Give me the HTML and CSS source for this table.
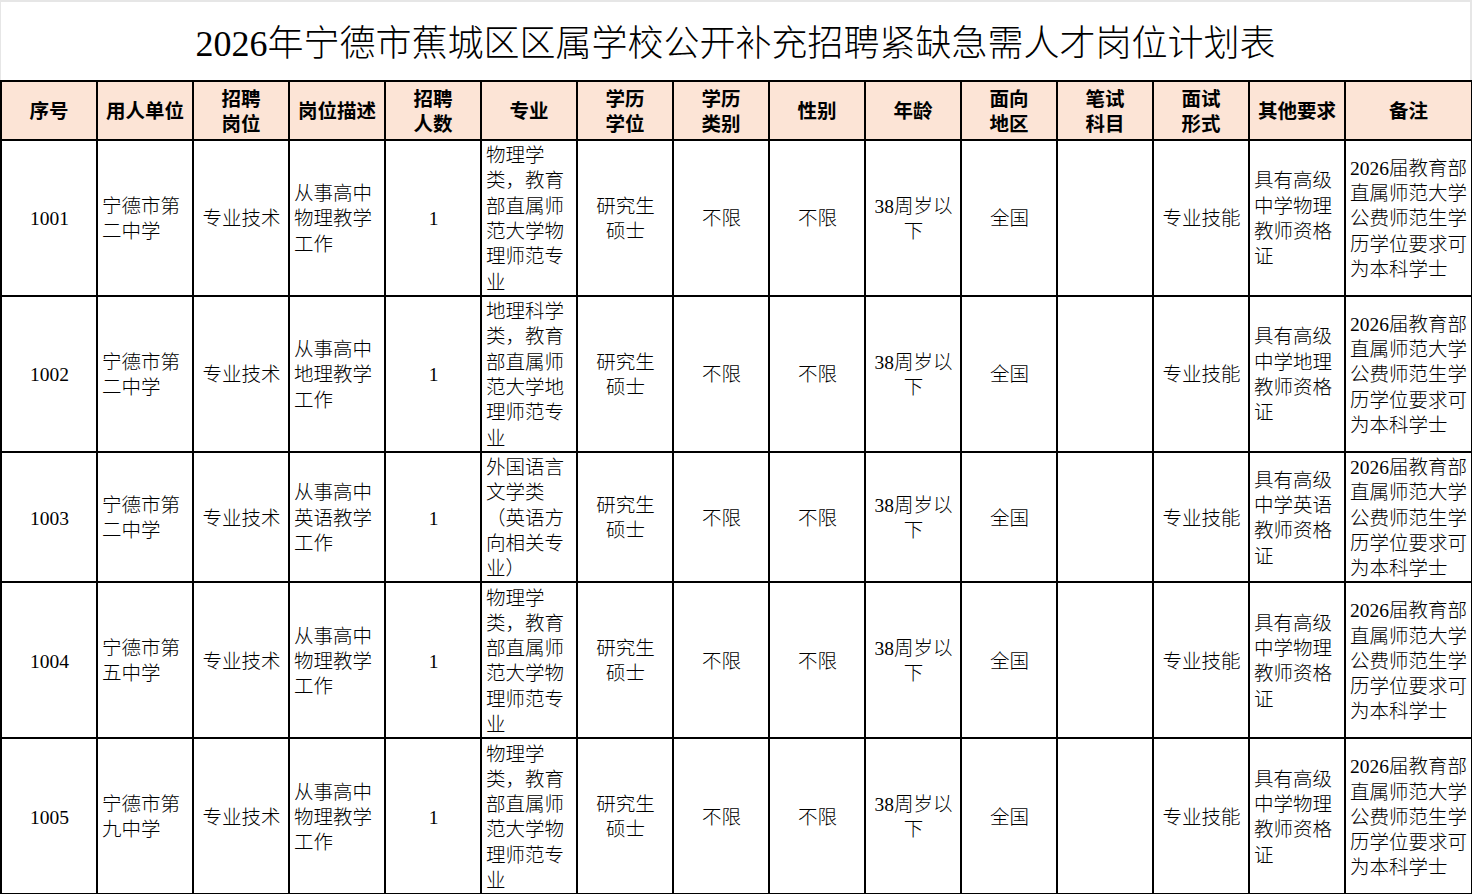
FILE: index.html
```html
<!DOCTYPE html>
<html lang="zh-CN">
<head>
<meta charset="utf-8">
<title>岗位计划表</title>
<link rel="stylesheet" href="styles.css">
</head>
<body>
<div class="sheet">
  <div class="title">2026年宁德市蕉城区区属学校公开补充招聘紧缺急需人才岗位计划表</div>
  <table class="grid">
    <colgroup>
      <col class="c"><col class="c"><col class="c"><col class="c"><col class="c">
      <col class="c"><col class="c"><col class="c"><col class="c"><col class="c">
      <col class="c"><col class="c"><col class="c"><col class="c"><col class="c-last">
    </colgroup>
    <thead>
      <tr class="r-head">
        <th>序号</th>
        <th>用人单位</th>
        <th>招聘<br>岗位</th>
        <th>岗位描述</th>
        <th>招聘<br>人数</th>
        <th>专业</th>
        <th>学历<br>学位</th>
        <th>学历<br>类别</th>
        <th>性别</th>
        <th>年龄</th>
        <th>面向<br>地区</th>
        <th>笔试<br>科目</th>
        <th>面试<br>形式</th>
        <th>其他要求</th>
        <th>备注</th>
      </tr>
    </thead>
    <tbody>
      <tr class="r-tall">
        <td class="ctr">1001</td>
        <td class="lft">宁德市第二中学</td>
        <td class="ctr">专业技术</td>
        <td class="lft">从事高中物理教学工作</td>
        <td class="ctr">1</td>
        <td class="lft">物理学类，教育部直属师范大学物理师范专业</td>
        <td class="ctr">研究生<br>硕士</td>
        <td class="ctr">不限</td>
        <td class="ctr">不限</td>
        <td class="ctr">38周岁以下</td>
        <td class="ctr">全国</td>
        <td class="ctr"></td>
        <td class="ctr">专业技能</td>
        <td class="lft">具有高级中学物理教师资格证</td>
        <td class="lft">2026届教育部直属师范大学公费师范生学历学位要求可为本科学士</td>
      </tr>
      <tr class="r-tall">
        <td class="ctr">1002</td>
        <td class="lft">宁德市第二中学</td>
        <td class="ctr">专业技术</td>
        <td class="lft">从事高中地理教学工作</td>
        <td class="ctr">1</td>
        <td class="lft">地理科学类，教育部直属师范大学地理师范专业</td>
        <td class="ctr">研究生<br>硕士</td>
        <td class="ctr">不限</td>
        <td class="ctr">不限</td>
        <td class="ctr">38周岁以下</td>
        <td class="ctr">全国</td>
        <td class="ctr"></td>
        <td class="ctr">专业技能</td>
        <td class="lft">具有高级中学地理教师资格证</td>
        <td class="lft">2026届教育部直属师范大学公费师范生学历学位要求可为本科学士</td>
      </tr>
      <tr class="r-short">
        <td class="ctr">1003</td>
        <td class="lft">宁德市第二中学</td>
        <td class="ctr">专业技术</td>
        <td class="lft">从事高中英语教学工作</td>
        <td class="ctr">1</td>
        <td class="lft">外国语言文学类（英语方向相关专业）</td>
        <td class="ctr">研究生<br>硕士</td>
        <td class="ctr">不限</td>
        <td class="ctr">不限</td>
        <td class="ctr">38周岁以下</td>
        <td class="ctr">全国</td>
        <td class="ctr"></td>
        <td class="ctr">专业技能</td>
        <td class="lft">具有高级中学英语教师资格证</td>
        <td class="lft">2026届教育部直属师范大学公费师范生学历学位要求可为本科学士</td>
      </tr>
      <tr class="r-tall">
        <td class="ctr">1004</td>
        <td class="lft">宁德市第五中学</td>
        <td class="ctr">专业技术</td>
        <td class="lft">从事高中物理教学工作</td>
        <td class="ctr">1</td>
        <td class="lft">物理学类，教育部直属师范大学物理师范专业</td>
        <td class="ctr">研究生<br>硕士</td>
        <td class="ctr">不限</td>
        <td class="ctr">不限</td>
        <td class="ctr">38周岁以下</td>
        <td class="ctr">全国</td>
        <td class="ctr"></td>
        <td class="ctr">专业技能</td>
        <td class="lft">具有高级中学物理教师资格证</td>
        <td class="lft">2026届教育部直属师范大学公费师范生学历学位要求可为本科学士</td>
      </tr>
      <tr class="r-tall">
        <td class="ctr">1005</td>
        <td class="lft">宁德市第九中学</td>
        <td class="ctr">专业技术</td>
        <td class="lft">从事高中物理教学工作</td>
        <td class="ctr">1</td>
        <td class="lft">物理学类，教育部直属师范大学物理师范专业</td>
        <td class="ctr">研究生<br>硕士</td>
        <td class="ctr">不限</td>
        <td class="ctr">不限</td>
        <td class="ctr">38周岁以下</td>
        <td class="ctr">全国</td>
        <td class="ctr"></td>
        <td class="ctr">专业技能</td>
        <td class="lft">具有高级中学物理教师资格证</td>
        <td class="lft">2026届教育部直属师范大学公费师范生学历学位要求可为本科学士</td>
      </tr>
    </tbody>
  </table>
</div>
</body>
</html>
```

FILE: styles.css
```css
html, body {
  margin: 0;
  padding: 0;
  background: #ffffff;
}

body {
  font-family: "Liberation Serif", "Noto Sans CJK SC", serif;
  color: #000;
}

.sheet {
  width: 1472px;
  height: 894px;
  overflow: hidden;
}

.title {
  box-sizing: border-box;
  height: 80px;
  border-top: 2px solid #e6e6e6;
  border-left: 1px solid #e6e6e6;
  border-right: 2px solid #e6e6e6;
  display: flex;
  align-items: center;
  justify-content: center;
  padding-bottom: 2px;
  font-size: 36px;
  font-weight: 300;
}

.grid {
  width: 1471px;
  border-collapse: collapse;
  table-layout: fixed;
}

.grid col.c { width: 96px; }
.grid col.c-last { width: 127px; }

.grid th,
.grid td {
  border: 2px solid #000;
  padding: 2px 3px 0 4px;
  vertical-align: middle;
  font-size: 19.5px;
  line-height: 25.3px;
  overflow: hidden;
}

.grid th {
  background: #fce4d6;
  font-weight: 700;
  text-align: center;
  line-height: 25px;
  padding: 2px 2px 0;
}

.grid td {
  font-weight: 300;
}

.r-head { height: 59px; }
.r-tall { height: 156px; }
.r-short { height: 130px; }

.ctr { text-align: center; }
.lft { text-align: left; }
```
